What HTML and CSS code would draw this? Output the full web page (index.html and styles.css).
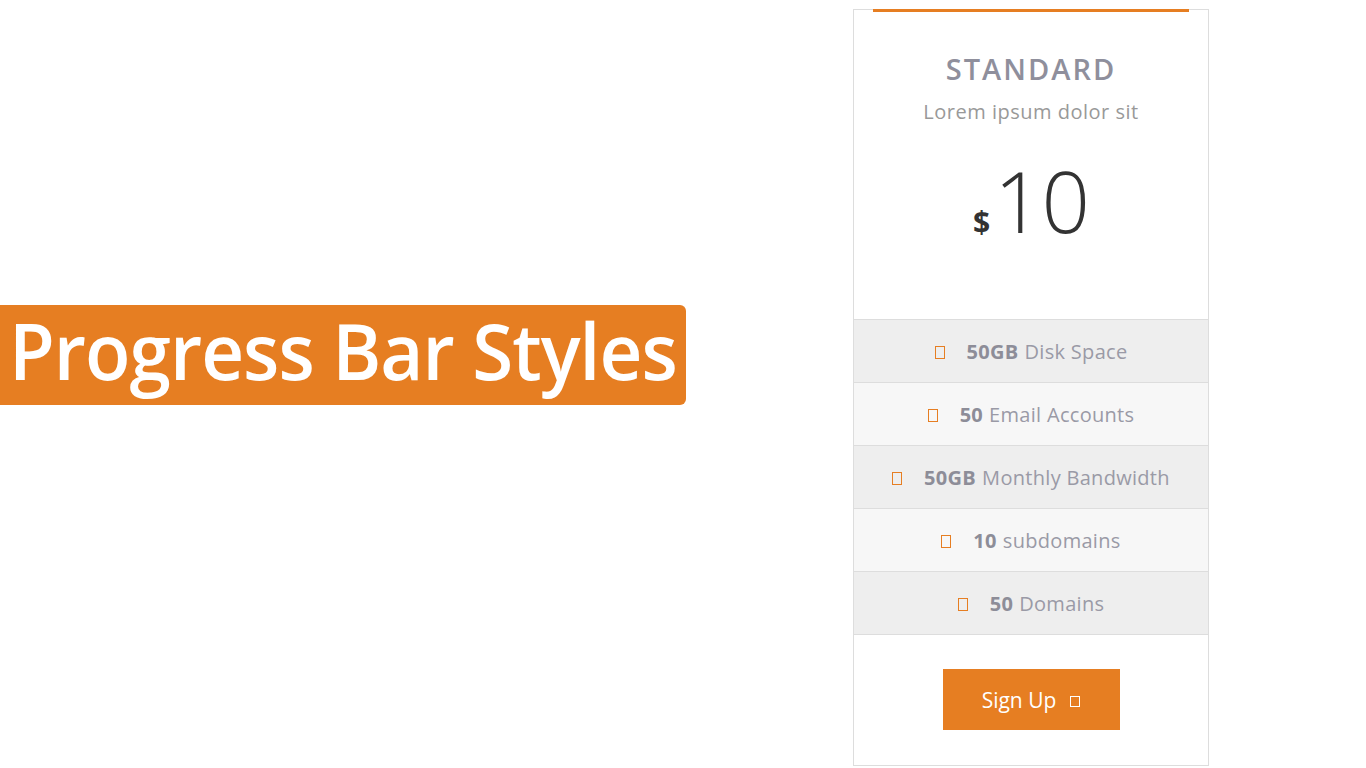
FILE: index.html
```html
<!DOCTYPE html>
<html>
<head>
<meta charset="utf-8">
<link rel="stylesheet" href="styles.css">
</head>
<body>
<div class="left">
  <div class="banner"><span class="banner-text">Progress Bar Styles</span></div>
</div>
<div class="card">
  <div class="card-head">
    <h3 class="title">STANDARD</h3>
    <p class="sub">Lorem ipsum dolor sit</p>
    <div class="price"><span class="cur">$</span><span class="amt">10</span></div>
  </div>
  <ul class="features">
    <li class="row dark"><span class="ico"></span><b>50GB</b> Disk Space</li>
    <li class="row light"><span class="ico"></span><b>50</b> Email Accounts</li>
    <li class="row dark"><span class="ico"></span><b>50GB</b> Monthly Bandwidth</li>
    <li class="row light"><span class="ico"></span><b>10</b> subdomains</li>
    <li class="row dark"><span class="ico"></span><b>50</b> Domains</li>
  </ul>
  <div class="card-foot">
    <a class="btn">Sign Up <span class="bico"></span></a>
  </div>
</div>
</body>
</html>
```
FILE: styles.css
```css
html, body { margin: 0; padding: 0; background: #fff; }
body {
  display: flex;
  align-items: flex-start;
  font-family: "Open Sans", "Noto Sans", sans-serif;
  height: 768px;
  overflow: hidden;
}
.left { width: 853px; flex: none; padding-top: 305px; }
.banner {
  width: 686px;
  height: 100px;
  background: #e67e22;
  color: #fff;
  border-radius: 0 6px 6px 0;
  white-space: nowrap;
}
.banner-text {
  display: inline-block;
  font-family: "Open Sans", sans-serif;
  font-weight: 600;
  font-size: 77px;
  line-height: 92px;
  margin-left: 9px;
  transform-origin: 0 50%;
  transform: scaleX(0.968);
  letter-spacing: -1px;
}
.card {
  margin-top: 9px;
  width: 354px;
  border: 1px solid #ddd;
  position: relative;
  background: #fff;
}
.card::before {
  content: "";
  position: absolute;
  left: 19px; right: 19px; top: -1px;
  height: 3px;
  background: #e67e22;
}
.card-head { height: 309px; text-align: center; padding-top: 1px; box-sizing: border-box; }
.title {
  margin: 38px 0 0;
  font-size: 29px;
  font-weight: 600;
  color: #8f8f9c;
  line-height: 40px;
  letter-spacing: 2px;
}
.sub { margin: 9px 0 0; font-size: 20px; color: #999; line-height: 28px; letter-spacing: 0.5px; }
.price { margin-top: 29px; color: #333; line-height: 90px; }
.cur { font-size: 30px; font-weight: 700; margin-right: 4px; }
.amt { font-size: 85px; font-weight: 300; letter-spacing: -1px; }
.features { list-style: none; margin: 0; padding: 0; border-top: 1px solid #ddd; }
.row {
  height: 62px;
  border-bottom: 1px solid #ddd;
  display: flex;
  align-items: center;
  justify-content: center;
  font-size: 20px;
  color: #9a9aa6;
  letter-spacing: 0.3px;
}
.row.dark { background: #eee; }
.row.light { background: #f7f7f7; }
.row b { color: #8d8d98; font-weight: 700; margin-right: 6px; }
.ico {
  display: inline-block;
  width: 8px; height: 11px;
  border: 1px solid #e67e22;
  margin-right: 22px;
  position: relative; top: 1px;
}
.card-foot { height: 130px; display: flex; justify-content: center; padding-top: 34px; box-sizing: border-box; }
.btn {
  display: flex; align-items: center; justify-content: center;
  width: 177px; height: 61px;
  background: #e67e22; color: #fff;
  font-size: 21px;
}
.bico {
  display: inline-block;
  width: 8px; height: 9px;
  border: 1px solid #fff;
  margin-left: 14px;
  position: relative; top: 2px;
}
```
